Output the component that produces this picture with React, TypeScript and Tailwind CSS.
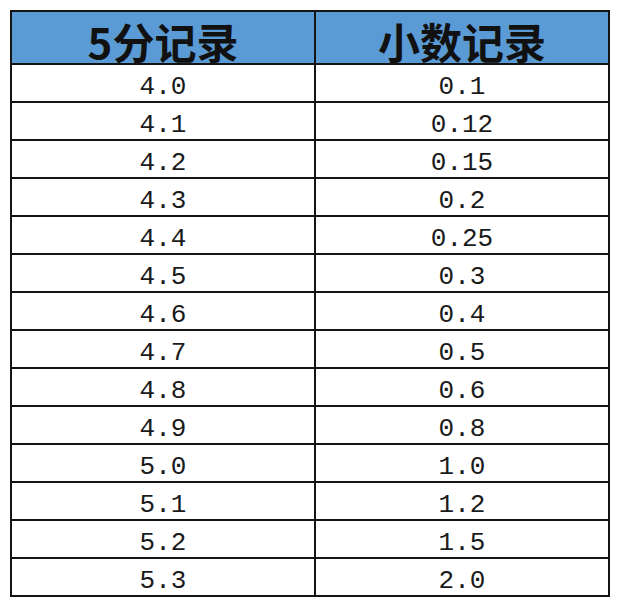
import React from 'react';

const rows: [string, string][] = [
  ['4.0', '0.1'],
  ['4.1', '0.12'],
  ['4.2', '0.15'],
  ['4.3', '0.2'],
  ['4.4', '0.25'],
  ['4.5', '0.3'],
  ['4.6', '0.4'],
  ['4.7', '0.5'],
  ['4.8', '0.6'],
  ['4.9', '0.8'],
  ['5.0', '1.0'],
  ['5.1', '1.2'],
  ['5.2', '1.5'],
  ['5.3', '2.0'],
];

const headCls =
  "h-[53px] flex items-end justify-center pb-[1px] bg-[#5b9bd5] border-r-2 border-b-2 border-[#141414] text-[42px] leading-none font-bold text-[#111] [font-family:'Noto_Sans_CJK_SC',sans-serif]";
const cellCls =
  "h-[38px] flex items-center justify-center pt-[8px] border-r-2 border-b-2 border-[#141414] text-[26px] leading-none text-[#1a1a1a] [font-family:'Liberation_Mono',monospace]";

const App: React.FC = () => {
  return (
    <div className="w-[622px] h-[608px] bg-white pt-[10px] pl-[10px]">
      <div className="w-[600px] grid grid-cols-[304px_294px] border-l-2 border-t-2 border-[#141414]">
        <div className={headCls}>5分记录</div>
        <div className={headCls}>小数记录</div>
        {rows.map(([a, b]) => (
          <React.Fragment key={a}>
            <div className={cellCls}>{a}</div>
            <div className={cellCls}>{b}</div>
          </React.Fragment>
        ))}
      </div>
    </div>
  );
};

export default App;
